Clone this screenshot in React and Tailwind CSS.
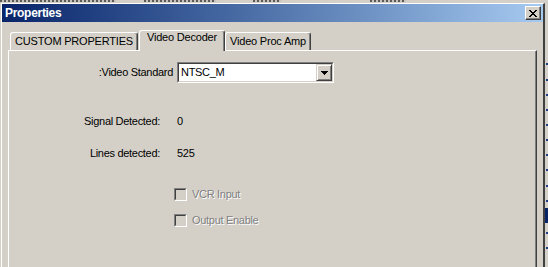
import React from "react";

const Tab = ({ label, selected, width, className = "" }) => (
    <div
        className={`${className} relative flex justify-center rounded-t-[3px] border-l border-t border-r border-l-white border-t-white border-r-[#404040] bg-[#d4d0c8] shadow-[inset_-1px_0_0_#808080] ${
            selected ? "z-10 h-[21px] -mb-px pt-0" : "h-[18px] pt-[2px]"
        }`}
        style={{ width }}
    >
        <span className="leading-[13px] text-black whitespace-nowrap tracking-[-0.2px]">{label}</span>
    </div>
);

const Checkbox = ({ label }) => (
    <div className="flex items-center h-[13px]">
        <div className="ml-[165px] w-[13px] h-[13px] border border-t-[#808080] border-l-[#808080] border-r-white border-b-white">
            <div className="w-full h-full border border-t-[#404040] border-l-[#404040] border-r-[#d4d0c8] border-b-[#d4d0c8] bg-[#d4d0c8]" />
        </div>
        <span className="ml-[5px] leading-[13px] text-[#808080] [text-shadow:1px_1px_0_#ffffff]">
            {label}
        </span>
    </div>
);

const App = () => {
    const dashes = [63, 79, 94, 109, 124, 139, 154, 169, 185, 200, 232, 247];

    return (
        <div className="w-[548px] h-[267px] overflow-hidden bg-[#d4d0c8] flex flex-col font-['Liberation_Sans',Arial,sans-serif] text-[11px]">
            {/* background window peeking out on top */}
            <div className="relative h-[3px] shrink-0">
                <div className="absolute left-0 top-0 h-[2px] w-[116px] bg-[repeating-linear-gradient(90deg,#5a5a5a_0_2px,#c8c4bc_2px_4px)]" />
                <div className="absolute left-[144px] top-0 h-[2px] w-[72px] bg-[repeating-linear-gradient(90deg,#5a5a5a_0_2px,#c8c4bc_2px_4px)]" />
                <div className="absolute left-[253px] top-0 h-[2px] w-[28px] bg-[repeating-linear-gradient(90deg,#5a5a5a_0_2px,#c8c4bc_2px_4px)]" />
                <div className="absolute left-[370px] top-0 h-[2px] w-[36px] bg-[repeating-linear-gradient(90deg,#5a5a5a_0_2px,#c8c4bc_2px_4px)]" />
            </div>

            <div className="flex flex-1 min-h-0">
                {/* Dialog */}
                <div className="ml-px w-[544px] flex flex-col border-l border-t border-r-2 border-l-white border-t-white border-r-[#404040]">
                    {/* Title bar */}
                    <div className="h-[18px] shrink-0 flex items-center justify-between bg-gradient-to-r from-[#0a246a] to-[#a6caf0] pl-[3px] pr-[2px]">
                        <span className="text-white font-bold text-[12px] leading-[14px] tracking-[-0.3px]">Properties</span>
                        <button className="w-[16px] h-[14px] flex items-center justify-center bg-[#d4d0c8] border border-t-white border-l-white border-r-[#404040] border-b-[#404040] shadow-[inset_-1px_-1px_0_#808080]">
                            <svg width="8" height="7" viewBox="0 0 8 7" shapeRendering="crispEdges">
                                <path d="M0 0h2v1h-2zM6 0h2v1h-2zM1 1h2v1h-2zM5 1h2v1h-2zM2 2h4v1h-4zM3 3h2v1h-2zM2 4h4v1h-4zM1 5h2v1h-2zM5 5h2v1h-2zM0 6h2v1h-2zM6 6h2v1h-2z" fill="#000" />
                            </svg>
                        </button>
                    </div>

                    {/* Tabs */}
                    <div className="mt-[8px] h-[20px] shrink-0 flex items-end pl-[8px]">
                        <Tab label="CUSTOM PROPERTIES" width={128} />
                        <Tab label="Video Decoder" width={86} selected className="ml-px" />
                        <Tab label="Video Proc Amp" width={86} />
                    </div>

                    {/* Panel */}
                    <div className="ml-[6px] w-[529px] flex-1 border-l border-t border-r border-l-white border-t-white border-r-[#404040] shadow-[inset_-1px_0_0_#808080] flex flex-col text-black tracking-[-0.3px]">
                        <div className="mt-[11px] flex items-center h-[21px]">
                            <span className="w-[164px] text-right leading-[13px]">:Video Standard</span>
                            <div className="ml-[4px] w-[157px] h-[21px] border border-t-[#808080] border-l-[#808080] border-r-white border-b-white">
                                <div className="w-full h-full flex items-center justify-between bg-white border border-t-[#404040] border-l-[#404040] border-r-[#d4d0c8] border-b-[#d4d0c8]">
                                    <span className="pl-[2px] leading-[13px] text-black">NTSC_M</span>
                                    <div className="w-[16px] h-full flex items-center justify-center bg-[#d4d0c8] border border-t-[#d4d0c8] border-l-[#d4d0c8] border-r-[#404040] border-b-[#404040] shadow-[inset_1px_1px_0_#ffffff,inset_-1px_-1px_0_#808080]">
                                        <svg width="7" height="4" viewBox="0 0 7 4" shapeRendering="crispEdges">
                                            <path d="M0 0h7v1h-7zM1 1h5v1h-5zM2 2h3v1h-3zM3 3h1v1h-1z" fill="#000" />
                                        </svg>
                                    </div>
                                </div>
                            </div>
                        </div>

                        <div className="mt-[31px] flex items-center h-[14px]">
                            <span className="w-[151px] text-right leading-[14px]">Signal Detected:</span>
                            <span className="ml-[17px] leading-[14px]">0</span>
                        </div>

                        <div className="mt-[18px] flex items-center h-[14px]">
                            <span className="w-[151px] text-right leading-[14px]">Lines detected:</span>
                            <span className="ml-[17px] leading-[14px]">525</span>
                        </div>

                        <div className="mt-[28px]">
                            <Checkbox label="VCR Input" />
                        </div>
                        <div className="mt-[13px]">
                            <Checkbox label="Output Enable" />
                        </div>
                    </div>
                </div>

                {/* background window peeking out on the right */}
                <div className="relative w-[3px] shrink-0">
                    {dashes.map((y) => (
                        <div
                            key={y}
                            className="absolute left-[1px] w-[2px] h-[2px] bg-[#1c3c8c]"
                            style={{ top: y - 3 }}
                        />
                    ))}
                    <div className="absolute left-0 top-[205px] w-[3px] h-[15px] bg-[#0a246a]" />
                </div>
            </div>
        </div>
    );
};

export default App;
